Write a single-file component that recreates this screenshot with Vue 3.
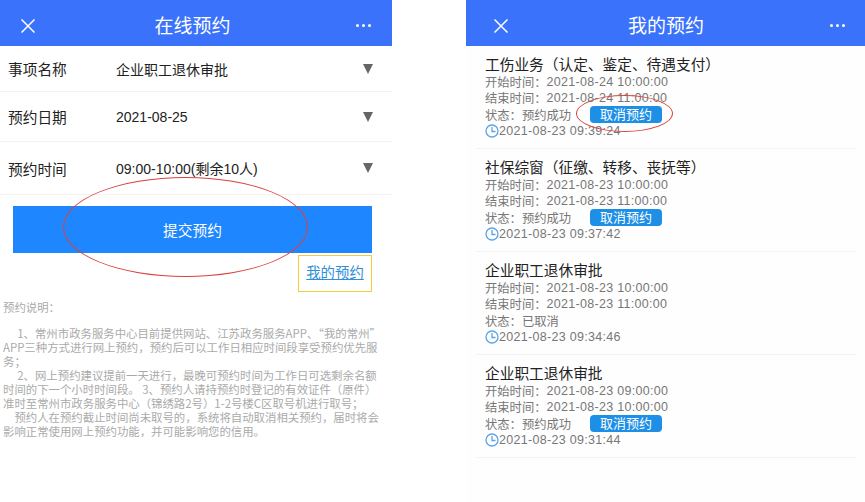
<template>
  <div class="page">
    <section class="panel left">
      <header class="topbar">
        <svg class="close" viewBox="0 0 14 14"><path d="M0.5 0.5L13.5 13.5M13.5 0.5L0.5 13.5" /></svg>
        <span class="title">在线预约</span>
        <span class="dots"><i></i><i></i><i></i></span>
      </header>

      <div v-for="row in formRows" :key="row.label" class="form-row" :style="{ height: row.height + 'px' }">
        <span class="label">{{ row.label }}</span>
        <span class="value">{{ row.value }}</span>
        <span class="arrow"></span>
      </div>

      <button class="submit">提交预约</button>
      <div class="link-wrap">
        <a class="my-link">我的预约</a>
      </div>

      <div class="notes">
        <p class="notes-title">{{ notesTitle }}</p>
        <p class="notes-body">{{ notesBody }}</p>
      </div>

      <div class="ring ring-big"></div>
    </section>

    <section class="panel right">
      <header class="topbar">
        <svg class="close" viewBox="0 0 14 14"><path d="M0.5 0.5L13.5 13.5M13.5 0.5L0.5 13.5" /></svg>
        <span class="title">我的预约</span>
        <span class="dots"><i></i><i></i><i></i></span>
      </header>

      <div v-for="item in bookings" :key="item.created" class="booking">
        <div class="booking-name">{{ item.name }}</div>
        <div class="line">{{ startLabel }}<span class="num">{{ item.start }}</span></div>
        <div class="line">{{ endLabel }}<span class="num">{{ item.end }}</span></div>
        <div class="line">
          {{ statusLabel }}{{ item.status }}
          <span v-if="item.canCancel" class="cancel">取消预约</span>
        </div>
        <div class="line created">
          <svg class="clock" viewBox="0 0 14 14">
            <circle cx="7" cy="7" r="6" />
            <path d="M7 3V7.5H10.5" />
          </svg>
          <span class="num">{{ item.created }}</span>
        </div>
      </div>

      <div class="ring ring-small"></div>
    </section>
  </div>
</template>

<script setup>
const formRows = [
  { label: '事项名称', value: '企业职工退休审批', height: 46 },
  { label: '预约日期', value: '2021-08-25', height: 50 },
  { label: '预约时间', value: '09:00-10:00(剩余10人)', height: 53 }
]

// full-width punctuation, written as escapes
const colon = '\uFF1A'
const comma = '\uFF0C'
const semi = '\uFF1B'
const open = '\uFF08'
const close = '\uFF09'

const startLabel = '开始时间' + colon
const endLabel = '结束时间' + colon
const statusLabel = '状态' + colon
const notesTitle = '预约说明' + colon

const notesBody = [
  '\u3000\u20051、常州市政务服务中心目前提供网站、江苏政务服务APP、\u201C我的常州\u201D',
  'APP三种方式进行网上预约' + comma + '预约后可以工作日相应时间段享受预约优先服',
  '务' + semi,
  '\u3000\u20052、网上预约建议提前一天进行' + comma + '最晚可预约时间为工作日可选剩余名额',
  '时间的下一个小时时间段。 3、预约人请持预约时登记的有效证件' + open + '原件' + close,
  '准时至常州市政务服务中心' + open + '锦绣路2号' + close + '1-2号楼C区取号机进行取号' + semi,
  '\u3000预约人在预约截止时间尚未取号的' + comma + '系统将自动取消相关预约' + comma + '届时将会',
  '影响正常使用网上预约功能' + comma + '并可能影响您的信用。'
].join('\n')

const bookings = [
  { name: '工伤业务' + open + '认定、鉴定、待遇支付' + close, start: '2021-08-24 10:00:00', end: '2021-08-24 11:00:00', status: '预约成功', canCancel: true, created: '2021-08-23 09:39:24' },
  { name: '社保综窗' + open + '征缴、转移、丧抚等' + close, start: '2021-08-23 10:00:00', end: '2021-08-23 11:00:00', status: '预约成功', canCancel: true, created: '2021-08-23 09:37:42' },
  { name: '企业职工退休审批', start: '2021-08-23 10:00:00', end: '2021-08-23 11:00:00', status: '已取消', canCancel: false, created: '2021-08-23 09:34:46' },
  { name: '企业职工退休审批', start: '2021-08-23 09:00:00', end: '2021-08-23 10:00:00', status: '预约成功', canCancel: true, created: '2021-08-23 09:31:44' }
]
</script>

<style>
html,
body {
  margin: 0;
  background: #fff;
  overflow: hidden;
}
</style>

<style scoped>
.page {
  display: flex;
  gap: 74px;
  width: 865px;
  height: 502px;
  overflow: hidden;
  background: #fff;
  font-family: 'Liberation Sans', 'Noto Sans CJK SC', sans-serif;
}

.panel {
  position: relative;
  flex: none;
}

.left {
  width: 392px;
}

.right {
  width: 399px;
  background: #fefefe;
}

.topbar {
  display: flex;
  align-items: center;
  justify-content: space-between;
  height: 46px;
  padding: 0 21px;
  box-sizing: border-box;
  background: #3a72fb;
  color: #fff;
}

.right .topbar {
  padding: 0 20px 0 28px;
}

.close {
  width: 14px;
  height: 14px;
  margin-top: 5px;
  fill: none;
  stroke: #fff;
  stroke-width: 1.5;
}

.title {
  font-size: 19px;
  margin: 3px 0 0 -6px;
}

.dots {
  display: flex;
  gap: 3px;
  margin-top: 5px;
}

.dots i {
  width: 3px;
  height: 3px;
  border-radius: 50%;
  background: #fff;
}

.form-row {
  display: flex;
  align-items: center;
  box-sizing: border-box;
  padding: 0 19px 0 8px;
  border-bottom: 1px solid #f3f3f3;
  color: #222;
}

.label {
  width: 108px;
  font-size: 14.7px;
}

.value {
  flex: 1;
  font-size: 14px;
}

.arrow {
  width: 0;
  height: 0;
  border-left: 5px solid transparent;
  border-right: 5px solid transparent;
  border-top: 10px solid #666;
}

.submit {
  display: block;
  width: 359px;
  height: 47px;
  margin: 11px 0 0 13px;
  padding: 0;
  border: 0;
  background: #1e86ff;
  color: #fff;
  font-family: inherit;
  font-size: 14.7px;
}

.link-wrap {
  display: flex;
  justify-content: flex-end;
  margin: 2px 20px 0 0;
}

.my-link {
  box-sizing: border-box;
  width: 74px;
  height: 37px;
  border: 1.5px solid #f5c93c;
  line-height: 34px;
  text-align: center;
  font-size: 14.4px;
  color: #2f8fdb;
  text-decoration: underline;
}

.notes {
  margin-top: 8px;
  padding-left: 3px;
  color: #aaa;
  font-family: 'Noto Sans CJK SC', 'Liberation Sans', sans-serif;
  font-size: 11.4px;
  line-height: 14px;
  white-space: pre;
}

.notes-title {
  margin: 0 0 12px;
}

.notes-body {
  margin: 0;
}

.booking {
  box-sizing: border-box;
  height: 103px;
  margin: 0 9px 0 10px;
  padding: 10px 0 0 9px;
  border-bottom: 1px solid #f3f3f3;
}

.booking-name {
  font-size: 14.7px;
  line-height: 18px;
  color: #222;
  white-space: nowrap;
}

.line {
  display: flex;
  align-items: center;
  height: 16.3px;
  font-size: 12.3px;
  color: #777;
  white-space: nowrap;
}

.num {
  font-size: 12.5px;
  letter-spacing: 0.3px;
}

.cancel {
  width: 72px;
  height: 17px;
  margin-left: 19px;
  border-radius: 4px;
  background: #1e8fe6;
  color: #fff;
  font-size: 13px;
  line-height: 17px;
  text-align: center;
}

.clock {
  flex: none;
  width: 14px;
  height: 14px;
  fill: none;
  stroke: #5aa5e8;
  stroke-width: 1.3;
}

.ring {
  position: absolute;
  box-sizing: border-box;
  border-radius: 50%;
  border: 1.3px solid #d9433f;
  pointer-events: none;
}

.ring-big {
  left: 63px;
  top: 177px;
  width: 245px;
  height: 100px;
}

.ring-small {
  left: 110px;
  top: 95px;
  width: 97px;
  height: 37px;
}
</style>
